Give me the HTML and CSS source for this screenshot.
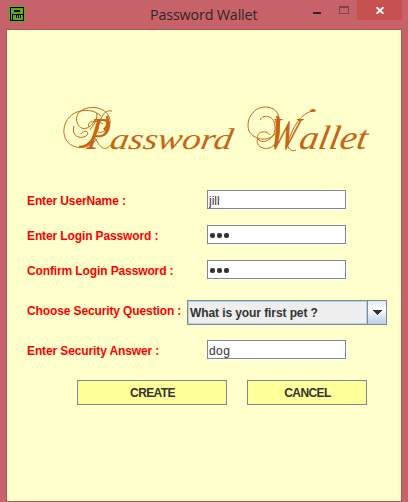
FILE: index.html
```html
<!DOCTYPE html>
<html lang="en">
<head>
<meta charset="utf-8">
<title>Password Wallet</title>
<link rel="stylesheet" href="styles.css">
</head>
<body>
<div class="window">
  <header class="titlebar">
    <svg class="app-icon" width="16" height="16" viewBox="0 0 16 16" shape-rendering="crispEdges"><path fill="#62a90b" d="M0 0h16v16H0z"/><path d="M1 1h14v14H1zM2 2v12h1V8h11V2zM4 9v5h10V9h-2v3h-1V9h-1v3H9V9H8v3H7V9z" fill-rule="evenodd"/><path d="M5 4h6v2H5z"/></svg>
    <span class="caption">Password Wallet</span>
    <div class="controls">
      <span class="minimize"></span>
      <span class="maximize"></span>
      <span class="close"><svg width="8" height="7" viewBox="0 0 8 7"><path d="M.5.2 7.500 6.800M7.500.2.500 6.800" stroke="#fff" stroke-width="1.900"/></svg></span>
    </div>
  </header>
  <main class="content">
    <svg class="logo" width="330" height="64" viewBox="55 99 330 64">
      <g class="flourish">
        <path d="M101 116C95 110 83 108 73 114C64 120 61 133 67 141C73 149 87 151 97 139"/>
        <path d="M95 119C91 130 80 132 77 122C74 112 85 107 94 107.500C105 108 113 117 109 126C107 131 102 133 98 132"/>
        <path d="M74 126C71 135 79 140 86 136C91 132 84 129 81 134M89 127C86 120 98 120 103 124M97 113C97 122 93 125 90 130"/>
        <path d="M112 111C103 109 101 119 98 127M95 138C99 145 103 153 111 145"/>
        <path d="M260 120C264 113 275 116 275 127C276 138 263 146 258 139C255 132 266 129 270 135"/>
        <path d="M275 134C267 143 253 139 249 131C245 119 254 106 267 107C277 108 281 116 279 127"/>
        <path d="M258 138C254 146 265 152 273 146C282 138 280 126 275 121M286 147C292 130 298 115 312 111M286 142C289 150 291 152 296 150"/>
        <path class="stem" d="M79 147C89 147 94 139 98 127M107 116C109 122 107 127 104 130M277 116C281 125 277 137 275 147"/>
      </g>
      <g transform="translate(0 148.500) skewX(-10)"><text class="script"><tspan class="initial" x="86" textLength="21" lengthAdjust="spacingAndGlyphs">P</tspan><tspan x="109" textLength="122" lengthAdjust="spacingAndGlyphs">assword</tspan> <tspan class="initial" x="267" textLength="29" lengthAdjust="spacingAndGlyphs">W</tspan><tspan class="tail" x="298" textLength="68" lengthAdjust="spacingAndGlyphs">allet</tspan></text></g>
      <ellipse cx="313" cy="110.500" rx="2.800" ry="1.500" fill="#c96417"/>
    </svg>
    <form class="form">
      <div class="row"><label for="user">Enter UserName :</label><input id="user" type="text" value="jill"></div>
      <div class="row"><label for="pass">Enter Login Password :</label><div class="field"><i></i><i></i><i></i></div></div>
      <div class="row"><label for="confirm">Confirm Login Password :</label><div class="field"><i></i><i></i><i></i></div></div>
      <div class="row question"><label>Choose Security Question :</label><div class="combo"><span class="value"><span>What is your first pet ?</span></span><span class="arrow"><svg width="10" height="5" viewBox="0 0 10 5" shape-rendering="crispEdges"><path d="M0 0h10L5 5z" fill="#333"/></svg></span></div></div>
      <div class="row"><label for="answer">Enter Security Answer :</label><input id="answer" type="text" value="dog"></div>
      <div class="buttons"><button class="create" type="button">CREATE</button><button class="cancel" type="button">CANCEL</button></div>
    </form>
  </main>
</div>
</body>
</html>
```

FILE: styles.css
```css
* { box-sizing: border-box; }
body { margin: 0; overflow: hidden; font-family: "Liberation Sans", Arial, sans-serif; }
.window { width: 408px; height: 502px; background: #c8626a; padding: 0 6px; display: flex; flex-direction: column; }
.titlebar { height: 29px; flex: none; display: flex; }
.app-icon { margin: 6px 0 0 3px; flex: none; }
.caption { width: 107px; margin-left: 125px; padding-top: 5px; font: 14.3px/20px "Open Sans", sans-serif; color: #302428; white-space: nowrap; letter-spacing: -.15px; }
.controls { display: flex; margin-left: auto; height: 20px; }
.minimize { width: 8px; height: 2px; background: #302428; margin: 12px 18px 0 0; }
.maximize { width: 10px; height: 8px; border: 1px solid #814047; border-top-width: 2px; margin: 6px 8px 0 0; }
.close { width: 45px; height: 20px; background: #c75050; display: flex; justify-content: center; align-items: center; }
.close svg { margin-top: 1px; }
.content { flex: 1; background: #ffffcc; border: 1px solid #ae5358; padding-top: 69px; }
.logo { display: block; margin-left: 48px; }
.flourish { fill: none; stroke: #c96417; stroke-width: 1; }
.stem { stroke-width: 2.5; }
.script { font: italic 30px "Liberation Serif", serif; fill: #c96417; }
.initial { font-size: 46px; }
.tail { font-size: 34px; }
.form { margin: 27px 0 0 20px; }
.row { display: flex; height: 19px; margin-bottom: 16px; align-items: center; }
label { width: 180px; flex: none; font-size: 12px; line-height: 14px; font-weight: bold; color: #f00; white-space: nowrap; padding-top: 3px; letter-spacing: -.12px; }
input, .field { width: 139px; height: 19px; border: 1px solid #7a8a99; background: #fff; box-shadow: 1px 1px #fff; padding: 2px 1px 0; margin: 0; border-radius: 0; font: 12px/15px "Liberation Sans", sans-serif; color: #333; outline: 0; }
#answer { letter-spacing: .4px; }
.field { display: flex; gap: 2px; padding: 7px 0 0 2px; }
.field i { width: 5px; height: 5px; border-radius: 2px; background: #333; }
.question { height: 25px; margin: 21px 0 15px; }
.question label { width: 160px; padding-top: 0; margin-top: -3px; }
.combo { display: flex; width: 200px; height: 25px; border: 1px solid #7a8a99; background: #eee; font-size: 12px; font-weight: bold; color: #333; letter-spacing: -.09px; }
.value { flex: 1; border: 1px solid #b8cfe5; padding-left: 1px; line-height: 23px; white-space: nowrap; }
.arrow { width: 19px; border-left: 1px solid #7a8a99; background: linear-gradient(#dfe9f3, #fff 35%, #b8cfe5); display: flex; align-items: center; justify-content: center; }
.buttons { display: flex; gap: 20px; margin: 21px 0 0 50px; }
button { height: 25px; padding: 0 0 0 1px; border: 1px solid #7a8a99; border-radius: 0; background: #ffff99; color: #333; font: bold 12px "Liberation Sans", sans-serif; letter-spacing: -.6px; }
.create { width: 150px; }
.cancel { width: 120px; }
```
